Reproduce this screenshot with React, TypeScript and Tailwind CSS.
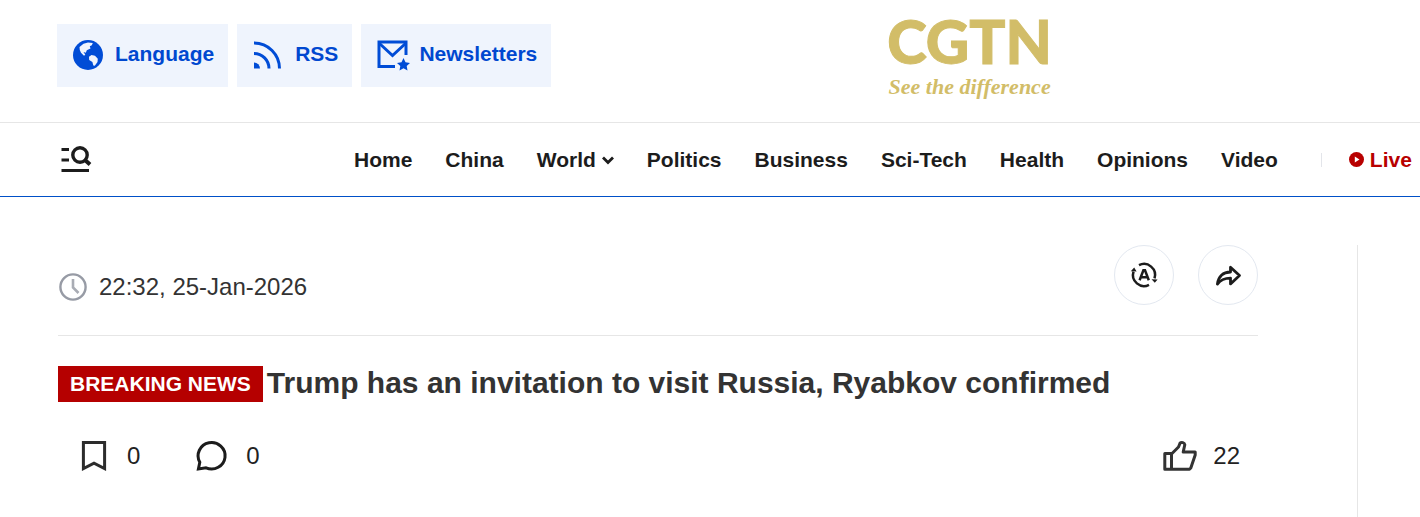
import React from 'react';

const GlobeIcon = () => (
  <svg className="h-[30px] w-[30px]" viewBox="0 0 30 30" aria-hidden="true">
    <circle cx="15" cy="15" r="15" fill="#004cd6" />
    <path d="M6.5 7L10.5 3.8L15 2.6L19.8 3L18.8 5.2L16.8 6.2L17.5 8.5L13.8 10.3L12.8 12.8L10.5 12L12.3 14.8L11 15.8L8 12.8L6.8 10Z" fill="#eff4fd" />
    <path d="M16 16.8L18.5 15L22 15.8L24.8 18.8L24.5 22L21.8 25.8L20.3 25.5L19.4 22L16.2 20Z" fill="#eff4fd" />
  </svg>
);

const RssIcon = () => (
  <svg className="h-[30px] w-[30px]" viewBox="0 0 30 30" fill="none" stroke="#004cd6" strokeWidth="3" aria-hidden="true">
    <path d="M1 3A25.5 25.5 0 0 1 26.5 28.5" />
    <path d="M1 13.5A15 15 0 0 1 16 28.5" />
    <path d="M1 22.5A6 6 0 0 1 7 28.5H1Z" fill="#004cd6" stroke="none" />
  </svg>
);

const MailIcon = () => (
  <svg className="h-8 w-[30px] overflow-visible" viewBox="0 0 30 32" fill="none" stroke="#004cd6" strokeWidth="3" aria-hidden="true">
    <path d="M18 27.5H2V3H29V16" />
    <path d="M2.5 4.5L15.5 16.5L28.5 4.5" />
    <path d="M26.5 19L28.5 23.3L33 23.9L29.7 27L30.5 31.5L26.5 29.3L22.5 31.5L23.3 27L20 23.9L24.5 23.3Z" fill="#004cd6" stroke="none" />
  </svg>
);

const MenuSearchIcon = () => (
  <svg className="h-7 w-8" viewBox="0 0 32 28" fill="none" stroke="#1c1c1c" strokeWidth="3" aria-hidden="true">
    <path d="M1.5 3.5H9M1.5 14H9M1.5 24.5H29" />
    <circle cx="20" cy="9" r="7.2" strokeWidth="3.4" />
    <path d="M25 14L30 18.5" strokeWidth="4" />
  </svg>
);

const ClockIcon = () => (
  <svg className="h-7 w-7" viewBox="0 0 28 28" fill="none" aria-hidden="true">
    <circle cx="14" cy="14" r="12.6" stroke="#979ba5" strokeWidth="2.4" />
    <path d="M14 6V14.5L19.5 20" stroke="#a9acb4" strokeWidth="2.6" />
  </svg>
);

const AutoTextIcon = () => (
  <svg className="h-[26px] w-[28px] overflow-visible" viewBox="0 0 28 26" fill="none" stroke="#1c1c1c" strokeWidth="2.5" aria-hidden="true">
    <path d="M9 3.2A11 11 0 0 1 24.5 16.3" />
    <path d="M3.5 9.7A11 11 0 0 0 19 22.8" />
    <path d="M21.5 17.2L27.6 17.6L24.8 20.8ZM0.8 9.2L4.2 5.6L6.6 9.6Z" fill="#1c1c1c" stroke="none" />
    <path d="M9.6 18.2L13.4 8.2H15L18.8 18.2M11 15.2H17.4" />
  </svg>
);

const ShareIcon = () => (
  <svg className="h-6 w-7" viewBox="0 0 28 24" fill="none" stroke="#1c1c1c" strokeWidth="2.8" strokeLinejoin="round" aria-hidden="true">
    <path d="M16.5 4.3V9C9 9 4.2 13.5 3.4 21.1C6.8 16.3 10.8 15.1 16.5 15.1V20.9L25.5 12.5Z" />
  </svg>
);

const BookmarkIcon = () => (
  <svg className="h-[30px] w-[26px]" viewBox="0 0 26 30" fill="none" stroke="#2c2c2c" strokeWidth="3" aria-hidden="true">
    <path d="M2.4 1.5H23.6V27.6L13 22.2L2.4 27.6Z" />
  </svg>
);

const CommentIcon = () => (
  <svg className="h-8 w-[30px] overflow-visible" viewBox="0 0 30 32" fill="none" stroke="#1c1c1c" strokeWidth="3" aria-hidden="true">
    <path d="M2.4 29L3.8 22.2A13.5 13.2 0 1 1 10 27.8Z" />
  </svg>
);

const LikeIcon = () => (
  <svg className="h-8 w-[34px]" viewBox="0 0 34 32" fill="none" stroke="#333" strokeWidth="3" strokeLinejoin="round" aria-hidden="true">
    <path d="M1.8 13.5H8.5V29.3H1.8ZM8.5 14L15.5 7L17 3.2C18.5 1.8 21.5 2.6 21.8 4.7L20.2 12H32.2V15L27.8 28L26.5 29.3H8.5" />
  </svg>
);

const tools = [
  { label: 'Language', icon: <GlobeIcon /> },
  { label: 'RSS', icon: <RssIcon /> },
  { label: 'Newsletters', icon: <MailIcon /> },
];

const sections = ['Home', 'China', 'World', 'Politics', 'Business', 'Sci-Tech', 'Health', 'Opinions', 'Video'];

const App: React.FC = () => {
  return (
    <div className="min-h-screen overflow-x-hidden bg-white font-['Liberation_Sans',Arial,sans-serif] text-[#1c1c1c]">
      <header>
        <div className="flex items-start border-b border-[#e6e6e6] pt-5 pl-[57px]">
          <div className="flex gap-[9px] pt-1 pb-[35px]">
            {tools.map((tool) => (
              <a key={tool.label} href="#" className="flex h-[63px] items-center gap-3 bg-[#eff4fd] pr-[14px] pb-0.5 pl-4 text-[21px] font-bold whitespace-nowrap text-[#0048d0]">
                {tool.icon}
                <span className="pb-0.5">{tool.label}</span>
              </a>
            ))}
          </div>
          <a href="#" className="ml-[336px] flex flex-col items-center text-[#d2bd68]">
            <span className="font-['Lato',sans-serif] text-[60px] leading-[42px] font-black [-webkit-text-stroke:1px_#d2bd68]">CGTN</span>
            <span className="font-['Liberation_Serif',serif] text-[22px] leading-[50px] font-bold whitespace-nowrap italic">See the difference</span>
          </a>
        </div>
        <div className="flex h-[74px] items-center border-b border-[#0050c8] pl-[60px]">
          <button type="button" aria-label="Menu and search" className="shrink-0">
            <MenuSearchIcon />
          </button>
          <nav className="ml-[262px] flex items-center gap-[33px] text-[21px] font-bold whitespace-nowrap">
            {sections.map((name) => (
              <a key={name} href="#" className="flex items-center gap-[6px]">
                {name}
                {name === 'World' && (
                  <svg className="h-3 w-3" viewBox="0 0 12 12" fill="none" stroke="#1c1c1c" strokeWidth="2.8" aria-hidden="true">
                    <path d="M1 3.5L6 8.5L11 3.5" />
                  </svg>
                )}
              </a>
            ))}
          </nav>
          <a href="#" className="ml-[43px] flex items-center text-[21px] font-bold text-[#b80000]">
            <span className="mr-[27px] h-[14px] border-l border-[#e3e5ea]" />
            <svg className="mr-[6px] h-[15px] w-[15px]" viewBox="0 0 15 15" aria-hidden="true">
              <circle cx="7.5" cy="7.5" r="7.5" fill="#b80000" />
              <path d="M5.8 4.5L10.5 7.5L5.8 10.5Z" fill="#fff" />
            </svg>
            Live
          </a>
        </div>
      </header>

      <div className="flex pt-12 pl-[58px]">
        <main className="flex-1">
          <div className="flex items-start justify-between border-b border-[#e6e6e6] pb-[30px]">
            <div className="flex items-center gap-3 pt-7 pl-px text-2xl leading-7 text-[#333]">
              <ClockIcon />
              <time>22:32, 25-Jan-2026</time>
            </div>
            <div className="flex gap-6">
              <button type="button" aria-label="Text size" className="flex h-[60px] w-[60px] items-center justify-center rounded-full border border-[#e3e8f0]">
                <AutoTextIcon />
              </button>
              <button type="button" aria-label="Share" className="flex h-[60px] w-[60px] items-center justify-center rounded-full border border-[#e3e8f0]">
                <ShareIcon />
              </button>
            </div>
          </div>

          <div className="mt-[30px] flex items-center gap-1">
            <span className="bg-[#b50000] px-3 text-[21px] leading-9 font-bold whitespace-nowrap text-white">BREAKING NEWS</span>
            <h1 className="pb-0.5 text-[30px] leading-8 font-bold text-[#333]">Trump has an invitation to visit Russia, Ryabkov confirmed</h1>
          </div>

          <div className="mt-[38px] flex items-center pr-[18px] pl-[23px] text-2xl leading-8 text-[#222]">
            <button type="button" aria-label="Bookmark" className="flex items-center gap-5">
              <BookmarkIcon />
              <span>0</span>
            </button>
            <button type="button" aria-label="Comments" className="ml-14 flex items-center gap-5">
              <CommentIcon />
              <span>0</span>
            </button>
            <button type="button" aria-label="Like" className="ml-auto flex items-center gap-4">
              <LikeIcon />
              <span>22</span>
            </button>
          </div>
        </main>
        <aside className="ml-[99px] min-h-[272px] w-[63px] border-l border-[#e6e6e6]" />
      </div>
    </div>
  );
};

export default App;
